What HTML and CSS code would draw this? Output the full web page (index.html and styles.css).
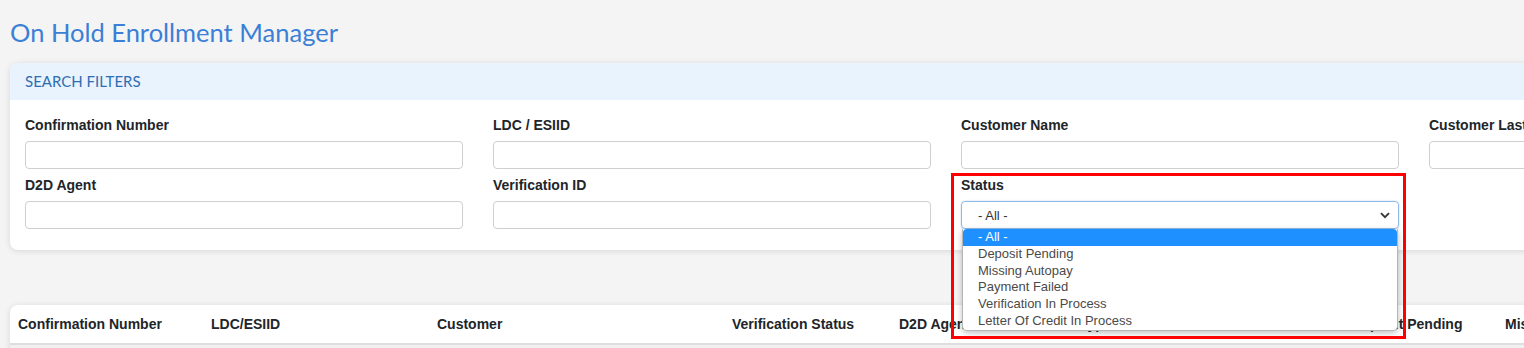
FILE: index.html
```html
<!DOCTYPE html>
<html>
<head>
    <title>On Hold Enrollment Manager</title>
    <link rel="stylesheet" href="styles.css">
</head>
<body>
    <div class="page">
        <h1 class="page-title">On Hold Enrollment Manager</h1>

        <div class="card filters">
            <div class="card-header">SEARCH FILTERS</div>
            <div class="card-body">
                <div class="filter-grid">
                    <div class="form-group">
                        <label for="conf">Confirmation Number</label>
                        <input type="text" id="conf">
                    </div>
                    <div class="form-group">
                        <label for="esiid">LDC / ESIID</label>
                        <input type="text" id="esiid">
                    </div>
                    <div class="form-group">
                        <label for="cname">Customer Name</label>
                        <input type="text" id="cname">
                    </div>
                    <div class="form-group">
                        <label for="clast">Customer Last Name</label>
                        <input type="text" id="clast">
                    </div>
                    <div class="form-group">
                        <label for="agent">D2D Agent</label>
                        <input type="text" id="agent">
                    </div>
                    <div class="form-group">
                        <label for="verif">Verification ID</label>
                        <input type="text" id="verif">
                    </div>
                    <div class="form-group status-group">
                        <label>Status</label>
                        <div class="fake-select">
                            <span>- All -</span>
                            <svg width="10" height="7" viewBox="0 0 10 7"><path d="M1 1.2 L5 5.2 L9 1.2" fill="none" stroke="#333" stroke-width="1.8"/></svg>
                        </div>
                        <ul class="select-options">
                            <li class="selected">- All -</li>
                            <li>Deposit Pending</li>
                            <li>Missing Autopay</li>
                            <li>Payment Failed</li>
                            <li>Verification In Process</li>
                            <li>Letter Of Credit In Process</li>
                        </ul>
                        <div class="highlight-box"></div>
                    </div>
                </div>
            </div>
        </div>

        <div class="card results">
            <table class="results-table">
                <thead>
                    <tr>
                        <th class="c-conf">Confirmation Number</th>
                        <th class="c-esiid">LDC/ESIID</th>
                        <th class="c-cust">Customer</th>
                        <th class="c-vstat">Verification Status</th>
                        <th class="c-agent">D2D Agent</th>
                        <th class="c-type">Hold Type</th>
                        <th class="c-date">Created Date</th>
                        <th class="c-dep">Deposit Pending</th>
                        <th class="c-auto">Missing Autopay</th>
                    </tr>
                </thead>
                <tbody>
                    <tr><td colspan="9">&nbsp;</td></tr>
                </tbody>
            </table>
        </div>
    </div>
</body>
</html>
```

FILE: styles.css
```css
html, body {
    margin: 0;
    padding: 0;
    overflow: hidden;
}
body {
    background-color: #f4f4f4;
    font-family: "Liberation Sans", Arial, sans-serif;
    color: #212529;
}
.page {
    width: 1900px;
    padding: 0 10px;
}
.page-title {
    margin: 0;
    padding-top: 17px;
    height: 63px;
    box-sizing: border-box;
    font-family: Lato, "Noto Sans", sans-serif;
    font-weight: 400;
    font-size: 25.5px;
    line-height: 30px;
    color: #3b7fd6;
}
.card {
    background-color: #fff;
    border-radius: 8px;
    box-shadow: 0 1px 6px rgba(0,0,0,0.12);
}
.card-header {
    height: 37px;
    line-height: 37px;
    padding-left: 15px;
    background-color: #e9f3fd;
    border-radius: 8px 8px 0 0;
    font-family: Lato, "Noto Sans", sans-serif;
    font-size: 15px;
    color: #2f6db1;
}
.card-body {
    padding: 17px 15px 21px;
}
.filter-grid {
    display: grid;
    grid-template-columns: repeat(4, 438px);
    column-gap: 30px;
    row-gap: 8px;
}
.form-group label {
    display: block;
    font-size: 14px;
    line-height: 16px;
    font-weight: bold;
    margin-bottom: 8px;
}
.form-group input {
    display: block;
    width: 100%;
    height: 28px;
    box-sizing: border-box;
    border: 1px solid #cfcfcf;
    border-radius: 4px;
    background: #fff;
}
.status-group {
    position: relative;
    z-index: 5;
}
.fake-select {
    height: 28px;
    box-sizing: border-box;
    border: 1px solid #8dbbe9;
    border-radius: 4px;
    box-shadow: 0 0 2px rgba(90,150,220,0.4);
    display: flex;
    align-items: center;
    justify-content: space-between;
    padding: 0 8px 0 16px;
    font-size: 13px;
    color: #333;
}
.select-options {
    position: absolute;
    top: 52px;
    left: 1px;
    right: 1px;
    margin: 0;
    padding: 0;
    list-style: none;
    background: #fff;
    border: 1px solid #b5b5b5;
    border-top: none;
    border-radius: 0 0 5px 5px;
    box-shadow: 0 2px 6px rgba(0,0,0,0.25);
    font-size: 13px;
    color: #4a4a4a;
}
.select-options li {
    line-height: 16.8px;
    padding-left: 15px;
}
.select-options li.selected {
    background-color: #1e90ff;
    color: #fff;
    border-radius: 4px 4px 0 0;
}
.highlight-box {
    position: absolute;
    left: -10px;
    right: -7px;
    top: -4px;
    height: 166px;
    box-sizing: border-box;
    border: 3px solid #f00;
    pointer-events: none;
}
.results {
    margin-top: 55px;
}
.results-table {
    border-collapse: collapse;
    font-size: 14px;
}
.results-table th {
    text-align: left;
    height: 38px;
    padding: 0 8px;
    font-weight: bold;
    white-space: nowrap;
    border-bottom: 2px solid #dedede;
}
.results-table td {
    background-color: #f0f0f0;
    height: 30px;
}
.c-conf { width: 177px; }
.c-esiid { width: 210px; }
.c-cust { width: 279px; }
.c-vstat { width: 151px; }
.c-agent { width: 130px; }
.c-type { width: 150px; }
.c-date { width: 125px; }
.c-dep { width: 137px; }
.c-auto { width: 140px; }
```
